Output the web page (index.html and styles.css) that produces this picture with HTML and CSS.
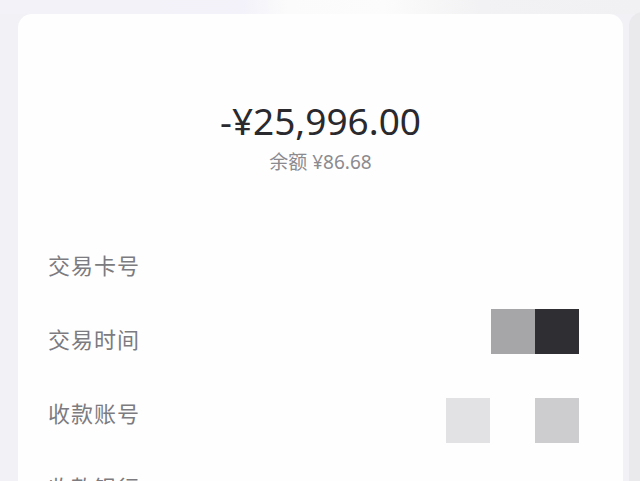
FILE: index.html
```html
<!DOCTYPE html>
<html>
<head>
  <meta charset="utf-8">
  <title>交易详情</title>
  <link rel="stylesheet" href="styles.css">
</head>
<body>

  <div class="topbar"></div>

  <div class="cards">
    <div class="card">
      <div class="amount">-¥25,996.00</div>
      <div class="balance">余额 ¥86.68</div>

      <div class="row">
        <span class="label">交易卡号</span>
      </div>
      <div class="row">
        <span class="label">交易时间</span>
        <div class="values up">
          <span class="block mid"></span>
          <span class="block dark"></span>
        </div>
      </div>
      <div class="row">
        <span class="label">收款账号</span>
        <div class="values down spaced">
          <span class="block pale"></span>
          <span class="block light"></span>
        </div>
      </div>
      <div class="row">
        <span class="label">收款银行</span>
      </div>
    </div>

    <!-- next card peeking in from the right -->
    <div class="card next"></div>
  </div>

</body>
</html>
```

FILE: styles.css
```css
html, body {
  height: 100%;
}

body {
  margin: 0;
  background: #f2f1f5;
  font-family: "Noto Sans", "Noto Sans CJK SC", sans-serif;
  overflow: hidden;
}

.topbar {
  height: 14px;
  background: linear-gradient(to right, #f3f2f8 0%, #f3f2fa 38%, #fbfbfb 45%, #fcfcfc 60%, #f2f2f4 75%, #f1f1f3 100%);
}

.cards {
  display: flex;
  gap: 6px;
  padding-left: 18px;
}

.card {
  flex: 0 0 605px;
  height: 600px;
  background: #fefefe;
  border-radius: 14px;
  box-sizing: border-box;
  padding: 87px 44px 0 30px;
}

.card.next {
  flex: 0 0 300px;
  margin-top: -2px;
  background: #eaeaed;
  padding: 0;
}

.amount {
  text-align: center;
  font-size: 37px;
  line-height: 40px;
  color: #2a292d;
  margin-left: 14px;
}

.balance {
  text-align: center;
  font-size: 19px;
  line-height: 24px;
  color: #8b8a8f;
  margin-top: 9px;
  margin-left: 14px;
  margin-bottom: 53px;
}

.row {
  display: flex;
  align-items: center;
  justify-content: space-between;
  height: 74px;
}

.label {
  font-family: "Noto Sans CJK SC", sans-serif;
  font-size: 22px;
  color: #7c7b80;
  letter-spacing: 1px;
}

.values {
  display: flex;
}

.values.up {
  margin-bottom: 14px;
}

.values.down {
  margin-top: 17px;
}

.values.spaced {
  gap: 45px;
}

.block {
  width: 44px;
  height: 45px;
}

.block.mid {
  background: #a6a5a8;
}

.block.dark {
  background: #2f2e32;
}

.block.pale {
  background: #e2e1e4;
}

.block.light {
  background: #cdccce;
}
```
